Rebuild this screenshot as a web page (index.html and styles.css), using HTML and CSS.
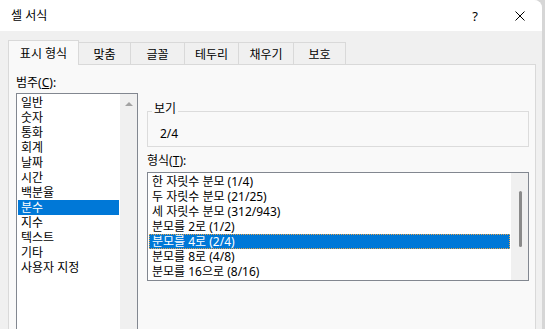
FILE: index.html
```html
<!DOCTYPE html>
<html>
<head>
    <meta charset="utf-8">
    <link rel="stylesheet" href="styles.css">
</head>
<body>
    <div class="window">
        <div class="titlebar">
            <span class="title">셀 서식</span>
            <span class="caption-btn help">?</span>
            <span class="caption-btn close">
                <svg width="10" height="10" viewBox="0 0 10 10">
                    <path d="M0.5 0.5 L9.5 9.5 M9.5 0.5 L0.5 9.5" stroke="#000" stroke-width="1" fill="none"/>
                </svg>
            </span>
        </div>

        <div class="tabs">
            <div class="tab active" style="width: 71px;">표시 형식</div>
            <div class="tab" style="width: 53px;">맞춤</div>
            <div class="tab" style="width: 55px;">글꼴</div>
            <div class="tab" style="width: 55px;">테두리</div>
            <div class="tab" style="width: 56px;">채우기</div>
            <div class="tab" style="width: 53px;">보호</div>
        </div>

        <div class="panel">
            <div class="col-left">
                <div class="label">범주(<u>C</u>):</div>
                <div class="listbox category">
                    <ul class="items">
                        <li>일반</li>
                        <li>숫자</li>
                        <li>통화</li>
                        <li>회계</li>
                        <li>날짜</li>
                        <li>시간</li>
                        <li>백분율</li>
                        <li class="selected">분수</li>
                        <li>지수</li>
                        <li>텍스트</li>
                        <li>기타</li>
                        <li>사용자 지정</li>
                    </ul>
                    <div class="scrollbar">
                        <span class="arrow-up"></span>
                    </div>
                </div>
            </div>

            <div class="col-right">
                <fieldset class="group">
                    <legend>보기</legend>
                    <div class="sample">2/4</div>
                </fieldset>

                <div class="label format-label">형식(<u>T</u>):</div>
                <div class="listbox formats">
                    <ul class="items">
                        <li>한 자릿수 분모 (1/4)</li>
                        <li>두 자릿수 분모 (21/25)</li>
                        <li>세 자릿수 분모 (312/943)</li>
                        <li>분모를 2로 (1/2)</li>
                        <li class="selected focused">분모를 4로 (2/4)</li>
                        <li>분모를 8로 (4/8)</li>
                        <li>분모를 16으로 (8/16)</li>
                    </ul>
                    <div class="scrollbar">
                        <span class="thumb"></span>
                    </div>
                </div>
            </div>
        </div>
    </div>
</body>
</html>
```

FILE: styles.css
```css
html, body {
    margin: 0;
    height: 100%;
    overflow: hidden;
}

body {
    background-color: #d6d6d6;
    font-family: "Noto Sans", "Noto Sans CJK KR", sans-serif;
    font-size: 12px;
    color: #000;
}

.window {
    width: 542px;
    height: 329px;
    background-color: #f0f0f0;
    border-top-right-radius: 8px;
    overflow: hidden;
}

/* title bar */
.titlebar {
    height: 31px;
    background-color: #ffffff;
    display: flex;
    align-items: center;
}

.title {
    padding-left: 11px;
    line-height: 15px;
}

.caption-btn {
    height: 31px;
    display: flex;
    align-items: center;
    justify-content: center;
}

.help {
    margin-left: auto;
    width: 46px;
    font-size: 13px;
}

.close {
    width: 44px;
}

/* tabs */
.tabs {
    display: flex;
    align-items: flex-end;
    padding: 9px 0 0 8px;
    height: 33px;
    box-sizing: border-box;
}

.tab {
    height: 22px;
    box-sizing: border-box;
    border: 1px solid #d9d9d9;
    border-bottom: none;
    margin-right: -1px;
    display: flex;
    align-items: center;
    justify-content: center;
    padding-top: 2px;
    line-height: 15px;
}

.tab.active {
    height: 25px;
    margin-bottom: -1px;
    background-color: #f9f9f9;
    position: relative;
    z-index: 1;
    padding-top: 0;
}

/* tab page */
.panel {
    margin-left: 8px;
    width: 528px;
    height: 280px;
    box-sizing: border-box;
    background-color: #f9f9f9;
    border: 1px solid #d9d9d9;
    display: flex;
    gap: 9px;
    padding: 10px 6px 0 7px;
}

.label {
    line-height: 15px;
}

.col-left {
    width: 122px;
}

.col-right {
    width: 382px;
    padding-top: 26px;
}

/* list boxes */
.listbox {
    border: 1px solid #828790;
    background-color: #ffffff;
    display: flex;
    box-sizing: border-box;
}

.category {
    margin-top: 3px;
    height: 250px;
}

.formats {
    margin-top: 4px;
    height: 109px;
}

.items {
    list-style: none;
    margin: 0;
    padding: 1px;
    flex: 1;
}

.items li {
    height: 15px;
    line-height: 15px;
    padding-left: 3px;
    box-sizing: border-box;
    white-space: nowrap;
}

.items li.selected {
    background-color: #0078d7;
    color: #ffffff;
}

.items li.focused {
    outline: 1px dotted #e7a34a;
    outline-offset: -1px;
}

.scrollbar {
    width: 17px;
    background-color: #f0f0f0;
    display: flex;
    flex-direction: column;
    align-items: center;
}

.arrow-up {
    margin-top: 8px;
    width: 0;
    height: 0;
    border-left: 4px solid transparent;
    border-right: 4px solid transparent;
    border-bottom: 4px solid #a3a3a3;
}

.formats .scrollbar {
    align-items: flex-start;
}

.thumb {
    margin: 18px 0 0 8px;
    width: 3px;
    height: 56px;
    border-radius: 2px;
    background-color: #8a8a8a;
}

/* sample group */
.group {
    margin: 0;
    min-width: 0;
    border: 1px solid #dcdcdc;
    padding: 4px 0 5px 12px;
}

.group legend {
    margin-left: -8px;
    padding: 0 2px 6px 2px;
    line-height: 15px;
}

.sample {
    line-height: 15px;
}

.format-label {
    margin-top: 6px;
}
```
